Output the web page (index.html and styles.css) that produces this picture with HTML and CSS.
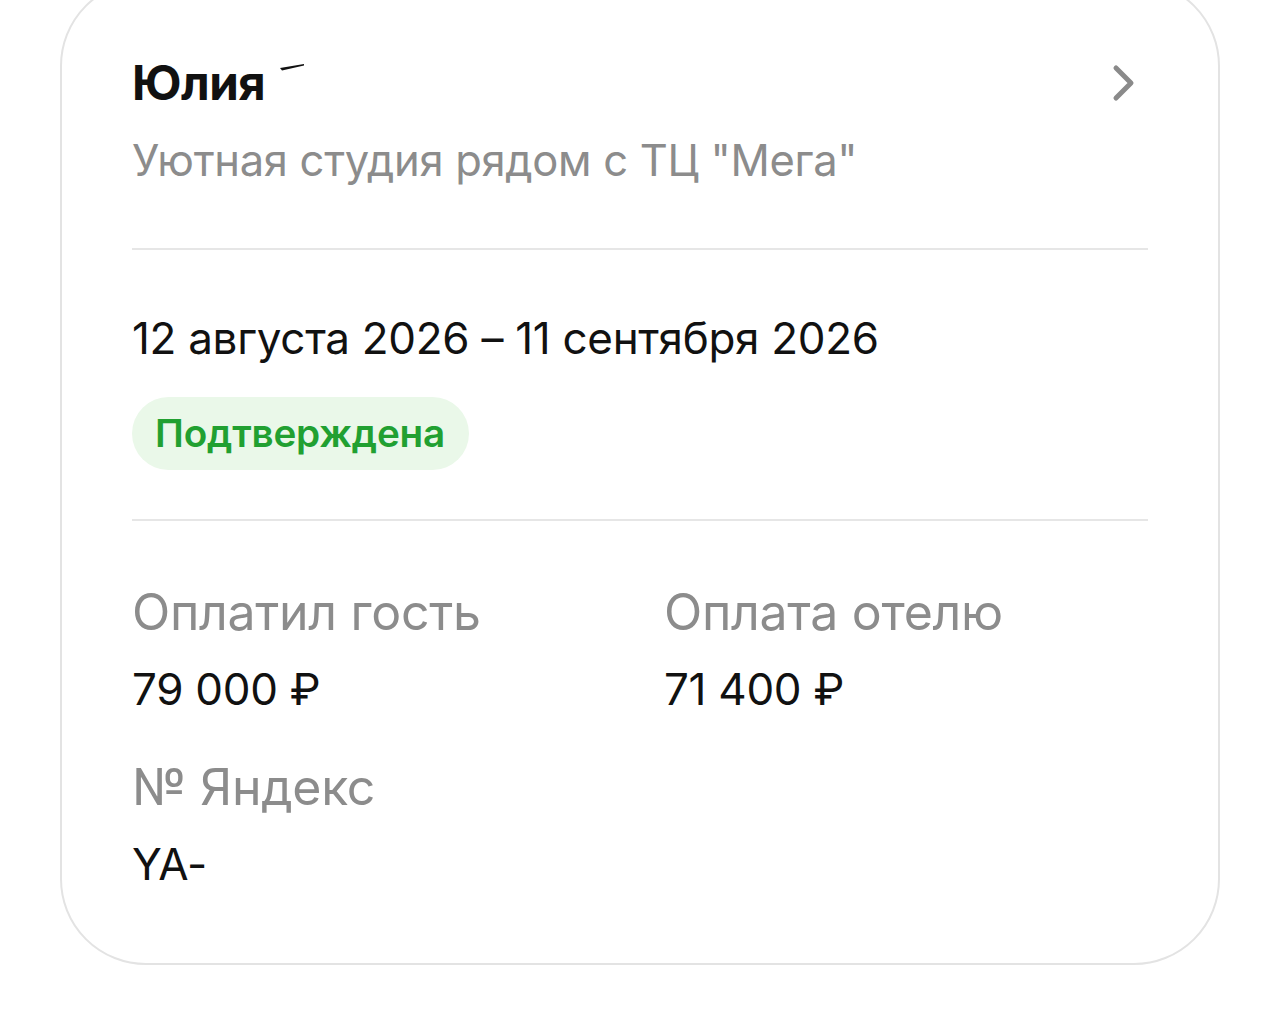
FILE: index.html
```html
<!DOCTYPE html>
<html lang="ru">
<head>
<meta charset="utf-8">
<title>Бронирование</title>
<link rel="stylesheet" href="styles.css">
</head>
<body>
<div class="card">
  <div class="header">
    <div class="title-row">
      <span class="name">Юлия</span>
      <svg class="mark" width="26" height="8" viewBox="0 0 26 8"><path d="M1 5 L25 1 L25 2.5 L3 7.5 Z" fill="#111"/></svg>
    </div>
    <svg class="chevron" width="28" height="40" viewBox="0 0 28 40"><path d="M6 5 L21 20 L6 35" fill="none" stroke="#8a8a8a" stroke-width="5" stroke-linecap="round" stroke-linejoin="round"/></svg>
  </div>
  <div class="subtitle">Уютная студия рядом с ТЦ "Мега"</div>
  <div class="divider first"></div>
  <div class="dates">12 августа 2026 – 11 сентября 2026</div>
  <div class="badge">Подтверждена</div>
  <div class="divider second"></div>
  <div class="grid">
    <div class="cell">
      <div class="label">Оплатил гость</div>
      <div class="value">79 000 ₽</div>
    </div>
    <div class="cell">
      <div class="label">Оплата отелю</div>
      <div class="value">71 400 ₽</div>
    </div>
    <div class="cell wide">
      <div class="label">№ Яндекс</div>
      <div class="value">YA-</div>
    </div>
  </div>
</div>
</body>
</html>
```
FILE: styles.css
```css
html, body {
  margin: 0;
  padding: 0;
  background: #ffffff;
}
body {
  font-family: Inter, "Noto Sans", "DejaVu Sans", sans-serif;
  color: #111111;
  overflow: hidden;
  height: 1025px;
}
.card {
  box-sizing: border-box;
  margin: -20px 0 0 60px;
  width: 1160px;
  height: 985px;
  border: 2px solid #e3e3e3;
  border-radius: 86px;
  padding: 73px 70px 0 70px;
}
.header {
  display: flex;
  justify-content: space-between;
  align-items: center;
  height: 56px;
}
.title-row {
  display: flex;
  align-items: flex-start;
}
.name {
  font-size: 47.5px;
  font-weight: 700;
  line-height: 56px;
  letter-spacing: -0.5px;
}
.mark {
  margin: 8px 0 0 14px;
}
.chevron {
  margin-right: 10px;
}
.subtitle {
  margin-top: 21px;
  font-size: 43.5px;
  line-height: 56px;
  color: #8c8c8c;
  letter-spacing: -0.3px;
}
.divider {
  height: 2px;
  background: #e6e6e6;
}
.divider.first { margin-top: 60px; }
.dates {
  margin-top: 60px;
  font-size: 44px;
  line-height: 56px;
  letter-spacing: -0.3px;
}
.badge {
  display: inline-block;
  margin-top: 31px;
  height: 73px;
  line-height: 73px;
  padding: 0 24px 0 23px;
  border-radius: 37px;
  background: #eaf8e9;
  color: #21a031;
  font-size: 38.7px;
  font-weight: 600;
  letter-spacing: -0.2px;
}
.divider.second { margin-top: 49px; }
.grid {
  display: grid;
  grid-template-columns: 532px 1fr;
  row-gap: 40px;
  margin-top: 61px;
}
.cell.wide { grid-column: 1 / 3; }
.label {
  font-size: 50px;
  line-height: 60px;
  color: #8c8c8c;
  letter-spacing: -0.3px;
}
.value {
  margin-top: 19px;
  font-size: 44px;
  line-height: 56px;
  letter-spacing: -0.3px;
}
```
